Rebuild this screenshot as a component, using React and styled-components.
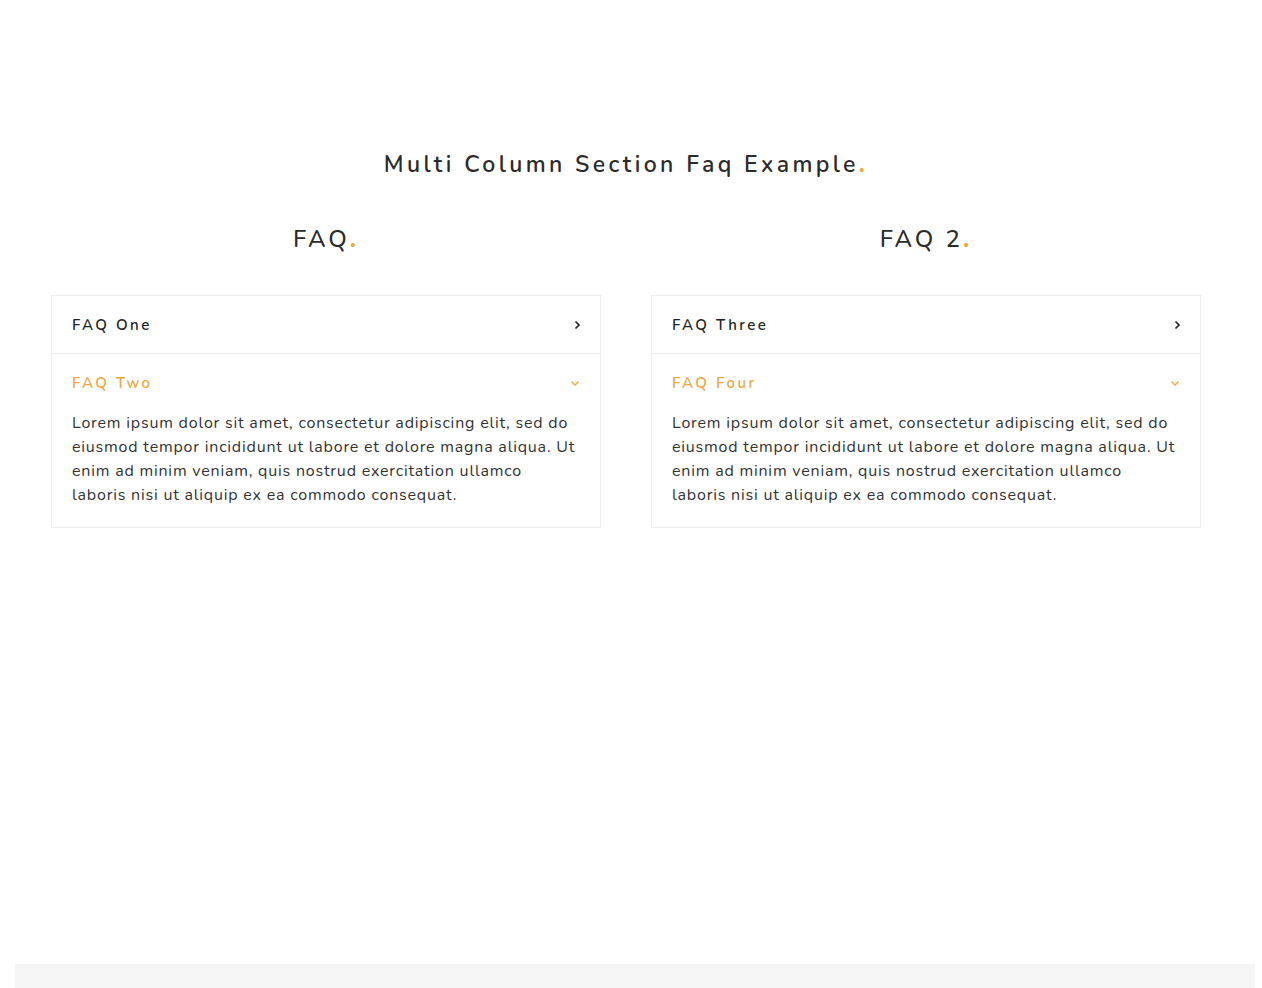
import React, { useState } from "react";
import styled, { createGlobalStyle } from "styled-components";

const GlobalStyle = createGlobalStyle`
  body {
    margin: 0;
    background: #fff;
    font-family: "Nunito", "Lato", "Noto Sans", sans-serif;
    color: #333;
  }
`;

const faqData = [
  {
    heading: "FAQ",
    items: [
      { title: "FAQ One", body: "" },
      {
        title: "FAQ Two",
        body:
          "Lorem ipsum dolor sit amet, consectetur adipiscing elit, sed do eiusmod tempor incididunt ut labore et dolore magna aliqua. Ut enim ad minim veniam, quis nostrud exercitation ullamco laboris nisi ut aliquip ex ea commodo consequat.",
      },
    ],
    open: 1,
  },
  {
    heading: "FAQ 2",
    items: [
      { title: "FAQ Three", body: "" },
      {
        title: "FAQ Four",
        body:
          "Lorem ipsum dolor sit amet, consectetur adipiscing elit, sed do eiusmod tempor incididunt ut labore et dolore magna aliqua. Ut enim ad minim veniam, quis nostrud exercitation ullamco laboris nisi ut aliquip ex ea commodo consequat.",
      },
    ],
    open: 1,
  },
];

const Chevron = ({ open }) => (
  <svg width="10" height="10" viewBox="0 0 10 10" fill="none">
    {open ? (
      <path d="M1.5 3.5 L5 7 L8.5 3.5" stroke="#e9a944" strokeWidth="1.4" />
    ) : (
      <path d="M5.5 1.5 L9 5 L5.5 8.5" stroke="#222" strokeWidth="1.6" />
    )}
  </svg>
);

const Column = ({ data }) => {
  const [open, setOpen] = useState(data.open);
  return (
    <Col>
      <ColHeading>
        {data.heading}
        <Dot>.</Dot>
      </ColHeading>
      <Accordion>
        {data.items.map((item, i) => (
          <Item key={item.title}>
            <ItemHead active={open === i} onClick={() => setOpen(open === i ? -1 : i)}>
              <span>{item.title}</span>
              <Chevron open={open === i} />
            </ItemHead>
            {open === i && <ItemBody>{item.body}</ItemBody>}
          </Item>
        ))}
      </Accordion>
    </Col>
  );
};

const App = () => {
  return (
    <Page>
      <GlobalStyle />
      <Section>
        <Title>
          Multi Column Section Faq Example<Dot>.</Dot>
        </Title>
        <Columns>
          {faqData.map((d) => (
            <Column key={d.heading} data={d} />
          ))}
        </Columns>
      </Section>
      <Footer />
    </Page>
  );
};

const Page = styled.div`
  min-height: 988px;
  display: flex;
  flex-direction: column;
`;

const Section = styled.section`
  padding: 151px 0 0 51px;
  height: 813px;
`;

const Title = styled.h2`
  margin: 0 0 45px;
  width: 1150px;
  text-align: center;
  font-size: 23px;
  font-weight: 600;
  letter-spacing: 3.4px;
  color: #2b2b2b;
  line-height: 28px;
`;

const Dot = styled.span`
  color: #e9a944;
  font-weight: 800;
`;

const Columns = styled.div`
  display: grid;
  grid-template-columns: 550px 550px;
  gap: 50px;
`;

const Col = styled.div`
  display: flex;
  flex-direction: column;
`;

const ColHeading = styled.h3`
  margin: 0 0 41px;
  text-align: center;
  font-size: 24px;
  font-weight: 500;
  letter-spacing: 3px;
  line-height: 30px;
  color: #2b2b2b;
`;

const Accordion = styled.div`
  border: 1px solid #eeeeee;
`;

const Item = styled.div`
  & + & {
    border-top: 1px solid #eeeeee;
  }
`;

const ItemHead = styled.div`
  display: flex;
  align-items: center;
  justify-content: space-between;
  height: 57px;
  padding: 0 20px;
  font-size: 15px;
  font-weight: 600;
  letter-spacing: 2.5px;
  color: ${(props) => (props.active ? "#e9a944" : "#222")};
  cursor: pointer;
`;

const ItemBody = styled.p`
  margin: 0;
  padding: 0 20px 20px;
  font-size: 16px;
  line-height: 24px;
  letter-spacing: 0.8px;
  color: #333;
`;

const Footer = styled.div`
  margin: 0 7px 0 15px;
  height: 24px;
  background: #f5f5f5;
`;

export default App;
